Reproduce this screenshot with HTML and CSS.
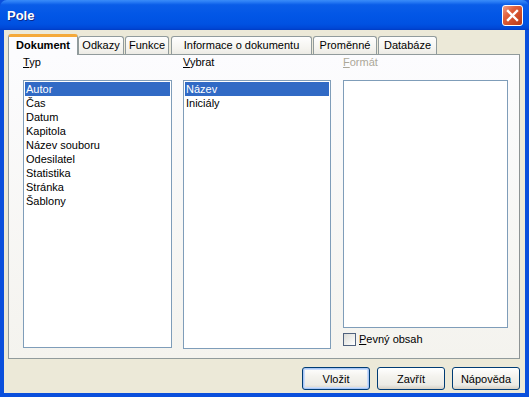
FILE: index.html
```html
<!DOCTYPE html>
<html lang="cs">
<head>
  <meta charset="UTF-8" />
  <meta name="viewport" content="width=device-width, initial-scale=1.0" />
  <title>Pole</title>
  <link rel="stylesheet" href="styles.css">
</head>
<body>
  <div class="window">
    <div class="titlebar">
      <span class="title">Pole</span>
      <div class="close">
        <svg width="13" height="13" viewBox="0 0 13 13">
          <path d="M2 2 L11 11 M11 2 L2 11" stroke="#fff" stroke-width="2.4" stroke-linecap="square" fill="none" />
        </svg>
      </div>
    </div>

    <div class="content">
      <div class="tabs">
        <div class="tab active tab-dokument">Dokument</div>
        <div class="tab tab-odkazy">Odkazy</div>
        <div class="tab tab-funkce">Funkce</div>
        <div class="tab tab-info">Informace o dokumentu</div>
        <div class="tab tab-promenne">Proměnné</div>
        <div class="tab tab-databaze">Databáze</div>
      </div>

      <div class="panel">
        <div class="column col-typ">
          <div class="label"><u>T</u>yp</div>
          <div class="listbox list-typ">
            <div class="item selected">Autor</div>
            <div class="item">Čas</div>
            <div class="item">Datum</div>
            <div class="item">Kapitola</div>
            <div class="item">Název souboru</div>
            <div class="item">Odesilatel</div>
            <div class="item">Statistika</div>
            <div class="item">Stránka</div>
            <div class="item">Šablony</div>
          </div>
        </div>

        <div class="column col-vybrat">
          <div class="label"><u>V</u>ybrat</div>
          <div class="listbox list-vybrat">
            <div class="item selected">Název</div>
            <div class="item">Iniciály</div>
          </div>
        </div>

        <div class="column col-format">
          <div class="label disabled"><u>F</u>ormát</div>
          <div class="listbox list-format"></div>
          <label class="check">
            <span class="checkbox"></span>
            <span><u>P</u>evný obsah</span>
          </label>
        </div>
      </div>

      <div class="buttons">
        <button class="default">Vložit</button>
        <button>Zavřít</button>
        <button>Nápověda</button>
      </div>
    </div>
  </div>
</body>
</html>
```

FILE: styles.css
```css
body {
  margin: 0;
  font-family: "Liberation Sans", Arial, sans-serif;
  font-size: 11px;
  color: #000;
}
.window {
  width: 529px;
  height: 397px;
  display: flex;
  flex-direction: column;
  background-color: #0a4fdc;
}
.titlebar {
  height: 30px;
  flex: none;
  display: flex;
  align-items: center;
  justify-content: space-between;
  padding: 0 6px 0 7px;
  border-radius: 7px 7px 0 0;
  background: linear-gradient(#3a8cf8 0%, #2a7df5 6%, #0a5de8 16%, #0256e6 50%, #0052e2 80%, #0047d6 94%, #003cc4 100%);
}
.title {
  font-weight: bold;
  font-size: 13px;
  color: #fff;
  text-shadow: 1px 1px #0b2a8c;
  margin-top: 1px;
}
.close {
  width: 19px;
  height: 19px;
  border: 1px solid #fff;
  border-radius: 3px;
  background: linear-gradient(135deg, #f0a08a 0%, #e0603c 35%, #cc4a26 70%, #b83a18 100%);
  display: flex;
  align-items: center;
  justify-content: center;
  margin-top: 1px;
}
.content {
  flex: 1;
  margin: 0 4px 4px 4px;
  padding: 0 5px 0 4px;
  background-color: #ece9d8;
  display: flex;
  flex-direction: column;
}
.tabs {
  display: flex;
  align-items: flex-end;
  height: 20px;
  margin-top: 4px;
}
.tab {
  box-sizing: border-box;
  height: 18px;
  line-height: 16px;
  text-align: center;
  border: 1px solid #919b9c;
  border-bottom: none;
  border-radius: 3px 3px 0 0;
  background: linear-gradient(#fefefe, #f4f3ee 70%, #ecebe5);
  flex: none;
}
.tab.active {
  height: 21px;
  margin-bottom: -1px;
  position: relative;
  z-index: 1;
  font-weight: bold;
  background: #fcfcfe;
  border-top: 3px solid #ffc83c;
  line-height: 17px;
  border-top-color: #f4a93a;
}
.tab-dokument { width: 70px; }
.tab-odkazy { width: 46px; }
.tab-funkce { width: 44px; margin-left: 1px; }
.tab-info { width: 141px; margin-left: 2px; }
.tab-promenne { width: 64px; margin-left: 1px; }
.tab-databaze { width: 59px; margin-left: 1px; }
.panel {
  box-sizing: border-box;
  width: 512px;
  height: 305px;
  border: 1px solid #919b9c;
  border-right-color: #8d9394;
  background: linear-gradient(#fcfcfe, #f4f3ee);
  display: flex;
  padding-left: 14px;
}
.column {
  display: flex;
  flex-direction: column;
}
.col-typ { width: 149px; }
.col-vybrat { width: 148px; margin-left: 11px; }
.col-format { width: 165px; margin-left: 12px; }
.label {
  line-height: 14px;
  height: 14px;
  margin-bottom: 11px;
}
.label.disabled {
  color: #aca899;
}
.listbox {
  box-sizing: border-box;
  border: 1px solid #7f9db9;
  background-color: #fff;
  padding: 1px;
  overflow: hidden;
}
.list-typ { height: 268px; }
.list-vybrat { height: 269px; }
.list-format { height: 248px; }
.item {
  height: 14px;
  line-height: 14px;
  padding-left: 1px;
  white-space: nowrap;
}
.item.selected {
  background-color: #316ac5;
  color: #fff;
}
.check {
  display: flex;
  align-items: center;
  margin-top: 5px;
  line-height: 13px;
}
.checkbox {
  box-sizing: border-box;
  width: 13px;
  height: 13px;
  border: 1px solid #50627e;
  background: linear-gradient(135deg, #dcdcd7, #fff);
  margin-right: 3px;
}
.buttons {
  display: flex;
  justify-content: flex-end;
  gap: 7px;
  margin-top: 8px;
}
button {
  box-sizing: border-box;
  width: 68px;
  height: 23px;
  padding: 0;
  font-family: "Liberation Sans", Arial, sans-serif;
  font-size: 11px;
  color: #000;
  border: 1px solid #003c74;
  border-radius: 3px;
  background: linear-gradient(#fff, #f4f3ee 40%, #ecebe6 80%, #d6d0c5);
}
button.default {
  box-shadow: inset 0 0 0 1px #a9c6f5, inset 0 0 0 2px #cadcfa;
}
```
